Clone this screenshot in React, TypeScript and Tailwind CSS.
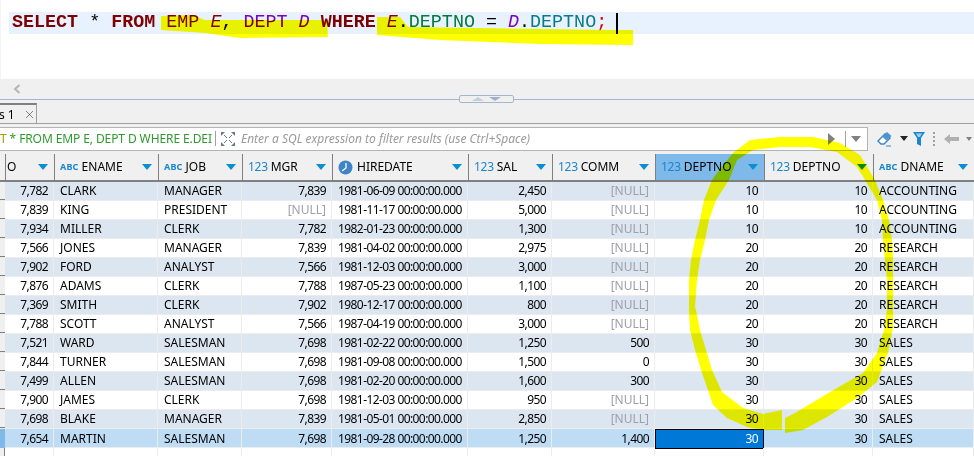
import { X } from 'lucide-react';

const cols = 'grid grid-cols-[5px_49px_104px_84px_90px_136px_84px_103px_109px_109px_101px]';

type Kind = 'abc' | 'num' | 'date' | 'none';

const headers: { label: string; kind: Kind; active?: boolean; green?: boolean }[] = [
  { label: 'O', kind: 'none' },
  { label: 'ENAME', kind: 'abc' },
  { label: 'JOB', kind: 'abc' },
  { label: 'MGR', kind: 'num' },
  { label: 'HIREDATE', kind: 'date' },
  { label: 'SAL', kind: 'num' },
  { label: 'COMM', kind: 'num' },
  { label: 'DEPTNO', kind: 'num', active: true },
  { label: 'DEPTNO', kind: 'num', green: true },
  { label: 'DNAME', kind: 'abc' },
];

const rows = [
  ['7,782', 'CLARK', 'MANAGER', '7,839', '1981-06-09 00:00:00.000', '2,450', '[NULL]', '10', '10', 'ACCOUNTING'],
  ['7,839', 'KING', 'PRESIDENT', '[NULL]', '1981-11-17 00:00:00.000', '5,000', '[NULL]', '10', '10', 'ACCOUNTING'],
  ['7,934', 'MILLER', 'CLERK', '7,782', '1982-01-23 00:00:00.000', '1,300', '[NULL]', '10', '10', 'ACCOUNTING'],
  ['7,566', 'JONES', 'MANAGER', '7,839', '1981-04-02 00:00:00.000', '2,975', '[NULL]', '20', '20', 'RESEARCH'],
  ['7,902', 'FORD', 'ANALYST', '7,566', '1981-12-03 00:00:00.000', '3,000', '[NULL]', '20', '20', 'RESEARCH'],
  ['7,876', 'ADAMS', 'CLERK', '7,788', '1987-05-23 00:00:00.000', '1,100', '[NULL]', '20', '20', 'RESEARCH'],
  ['7,369', 'SMITH', 'CLERK', '7,902', '1980-12-17 00:00:00.000', '800', '[NULL]', '20', '20', 'RESEARCH'],
  ['7,788', 'SCOTT', 'ANALYST', '7,566', '1987-04-19 00:00:00.000', '3,000', '[NULL]', '20', '20', 'RESEARCH'],
  ['7,521', 'WARD', 'SALESMAN', '7,698', '1981-02-22 00:00:00.000', '1,250', '500', '30', '30', 'SALES'],
  ['7,844', 'TURNER', 'SALESMAN', '7,698', '1981-09-08 00:00:00.000', '1,500', '0', '30', '30', 'SALES'],
  ['7,499', 'ALLEN', 'SALESMAN', '7,698', '1981-02-20 00:00:00.000', '1,600', '300', '30', '30', 'SALES'],
  ['7,900', 'JAMES', 'CLERK', '7,698', '1981-12-03 00:00:00.000', '950', '[NULL]', '30', '30', 'SALES'],
  ['7,698', 'BLAKE', 'MANAGER', '7,839', '1981-05-01 00:00:00.000', '2,850', '[NULL]', '30', '30', 'SALES'],
  ['7,654', 'MARTIN', 'SALESMAN', '7,698', '1981-09-28 00:00:00.000', '1,250', '1,400', '30', '30', 'SALES'],
];

const leftAligned = [1, 2, 9];

function SortArrow({ green }: { green?: boolean }) {
  return (
    <svg width="10" height="6" viewBox="0 0 10 6" className="ml-auto shrink-0">
      <path d="M0 0h10L5 6z" fill={green ? '#0a8a1e' : '#0b8fd0'} />
    </svg>
  );
}

function TypeIcon({ kind }: { kind: Kind }) {
  if (kind === 'abc') {
    return <span className="mr-[3px] text-[9px] font-bold tracking-[0.2px] text-[#1b86cf]">ABC</span>;
  }
  if (kind === 'num') {
    return <span className="mr-[3px] tracking-[-0.3px] text-[#1b86cf]">123</span>;
  }
  if (kind === 'date') {
    return (
      <svg width="15" height="15" viewBox="0 0 15 15" className="mr-[4px] shrink-0">
        <circle cx="7.5" cy="7.5" r="7" fill="#3d85c6" />
        <path d="M8 3v5L4 11" stroke="#fff" strokeWidth="1.3" fill="none" />
      </svg>
    );
  }
  return null;
}

function Editor() {
  return (
    <div className="h-[79px] border-l border-[#f4f4f4] bg-white pt-[12px] pl-[8px]">
      <div className="flex h-[22px] items-center bg-[#e8f2fe] pt-[1px] pl-[3px] font-['Liberation_Mono',monospace] text-[18.36px] leading-none whitespace-pre text-black">
        <span className="font-bold text-[#7f0000]">SELECT</span>
        <span> * </span>
        <span className="font-bold text-[#7f0000]">FROM</span>
        <span> </span>
        <span className="text-[#800000]">EMP</span>
        <span> </span>
        <span className="text-[#800000] italic">E</span>
        <span>, </span>
        <span className="text-[#7a00c4]">DEPT</span>
        <span> </span>
        <span className="text-[#7a00c4] italic">D</span>
        <span> </span>
        <span className="font-bold text-[#7f0000]">WHERE</span>
        <span> </span>
        <span className="text-[#800000] italic">E</span>
        <span>.</span>
        <span className="text-[#007a3d]">DEPTNO</span>
        <span> = </span>
        <span className="text-[#7a00c4] italic">D</span>
        <span>.</span>
        <span className="text-[#0a7a8a]">DEPTNO</span>
        <span className="text-[#e00000]">;</span>
        <span className="ml-[9px] h-[21px] w-[2px] bg-black" />
      </div>
    </div>
  );
}

function EditorScrollbar() {
  return (
    <div className="flex h-[20px] items-center bg-[#f0f0f0] pl-[13px]">
      <svg width="8" height="10" viewBox="0 0 8 10">
        <path d="M6.5 1L2 5l4.5 4" stroke="#b5b5b5" strokeWidth="2" fill="none" />
      </svg>
    </div>
  );
}

function Splitter() {
  return (
    <div className="flex h-[1px] justify-center bg-[#a3b8cf]">
      <div className="z-10 mt-[-4px] ml-[-1px] flex h-[8px] w-[55px] shrink-0 items-center justify-center gap-[5px] rounded-[2px] border border-[#a3b8cf] bg-[#f0f0f0]">
        <svg width="12" height="4" viewBox="0 0 12 4"><path d="M0 4h12L6 0z" fill="#c2cfdc" /></svg>
        <svg width="12" height="4" viewBox="0 0 12 4"><path d="M0 0h12L6 4z" fill="#9fb3c8" /></svg>
      </div>
    </div>
  );
}

function TabBar() {
  return (
    <div className="h-[24px] border-b border-[#a0a0a0] bg-[#f0f0f0] pt-[3px]">
      <div className="flex h-[21px] w-[37px] items-center border-t-2 border-r border-t-[#808080] border-r-[#a0a0a0] text-[12px] text-black">
        <span className="ml-[-1px]">s 1</span>
        <X size={13} strokeWidth={1} className="ml-[8px] text-[#222]" />
      </div>
    </div>
  );
}

function FilterBar() {
  return (
    <div className="flex h-[30px] items-center bg-[#f0f0f0] pb-[1px]">
      <div className="flex h-[24px] w-[868px] items-center border-t border-r border-b border-[#b4b4b4] bg-white">
        <div className="w-[212px] shrink-0 text-[12px] tracking-[-0.1px] whitespace-nowrap text-[#2f9a2f]">
          <span className="text-[#a0a000]">T</span> * FROM EMP E, DEPT D WHERE E.DEI
        </div>
        <div className="ml-[3px] h-[15px] w-[1px] bg-[#a0a0a0]" />
        <svg width="16" height="16" viewBox="0 0 16 16" className="ml-[4px] shrink-0">
          <path d="M1 1h4L1 5zM15 1h-4l4 4zM1 15h4l-4-4zM15 15h-4l4-4z" fill="#6a7a80" />
          <path d="M4 4l3 3M12 4L9 7M4 12l3-3M12 12L9 9" stroke="#6a7a80" />
        </svg>
        <span className="ml-[5px] text-[12px] whitespace-nowrap text-[#9a9a9a] italic">
          Enter a SQL expression to filter results (use Ctrl+Space)
        </span>
        <svg width="7" height="12" viewBox="0 0 7 12" className="ml-auto shrink-0">
          <path d="M0 0l7 6-7 6z" fill="#808080" />
        </svg>
        <div className="ml-[10px] h-[16px] w-[1px] bg-[#a0a0a0]" />
        <svg width="10" height="6" viewBox="0 0 10 6" className="mr-[6px] ml-[5px] shrink-0">
          <path d="M0 0h10L5 6z" fill="#808080" />
        </svg>
      </div>
      <svg width="16" height="16" viewBox="0 0 16 16" className="ml-[9px] shrink-0">
        <path d="M1 10l7-7 5 4-6 6H4z" fill="#fff" stroke="#3d85c6" strokeWidth="1.4" />
        <path d="M5 5.5l4.5 4L14.5 5 10 1z" fill="#4f94d0" />
        <path d="M9 15h5" stroke="#3d85c6" />
      </svg>
      <svg width="8" height="5" viewBox="0 0 8 5" className="ml-[7px] shrink-0">
        <path d="M0 0h8L4 5z" fill="#222" />
      </svg>
      <svg width="12" height="14" viewBox="0 0 12 14" className="ml-[5px] shrink-0">
        <path d="M0 0h12L8 6v8l-4-2V6z" fill="#1b86cf" />
        <path d="M3 1.5h6L7 5H5z" fill="#9fd0f0" />
      </svg>
      <div className="ml-[8px] h-[14px] border-l-2 border-dotted border-[#a0a0a0]" />
      <svg width="15" height="10" viewBox="0 0 15 10" className="ml-[9px] shrink-0">
        <path d="M0 5l6-5v3h9v4H6v3z" fill="#b0b0b0" />
      </svg>
      <svg width="6" height="4" viewBox="0 0 6 4" className="ml-[7px] shrink-0">
        <path d="M0 0h6L3 4z" fill="#808080" />
      </svg>
    </div>
  );
}

function GridHeader() {
  return (
    <div className={`${cols} h-[28px] border-b-2 border-[#808080] bg-[#f0f0f0] text-[12px] text-black`}>
      <div />
      {headers.map((h, i) => (
        <div
          key={i}
          className={`flex items-center border-l border-[#808080] pr-[6px] ${i === 0 ? 'pl-[1px]' : 'pl-[5px]'} ${
            h.active ? 'bg-[#7fb9ea]' : ''
          }`}
        >
          <TypeIcon kind={h.kind} />
          <span>{h.label}</span>
          <SortArrow green={h.green} />
        </div>
      ))}
    </div>
  );
}

function GridRows() {
  return (
    <div className="bg-white text-[12px] text-black">
      {rows.map((row, r) => {
        const last = r === rows.length - 1;
        const bg = last ? 'bg-[#bfdcf5]' : r % 2 === 0 ? 'bg-[#dce6f1]' : 'bg-white';
        return (
          <div key={r} className={`${cols} h-[19px] border-b border-[#ececec] ${bg}`}>
            <div className={`border-b border-[#808080] ${last ? 'bg-[#7fb9ea]' : 'bg-[#f0f0f0]'}`} />
            {row.map((value, c) => {
              const isNull = value === '[NULL]';
              const selected = last && c === 7;
              return (
                <div
                  key={c}
                  className={`flex items-center border-r border-[#ececec] whitespace-nowrap ${
                    leftAligned.includes(c)
                      ? 'pl-[6px]'
                      : c === 4
                        ? 'pl-[6px] tracking-[-0.58px]'
                        : 'justify-end pr-[5px] tracking-[-0.6px]'
                  } ${isNull ? 'tracking-normal text-[#a0a0a8]' : ''} ${
                    selected ? 'border border-black bg-[#0078d7] text-white' : ''
                  }`}
                >
                  {value}
                </div>
              );
            })}
          </div>
        );
      })}
      <div className={`${cols} h-[9px]`}>
        <div className="border-r border-[#808080] bg-[#f0f0f0]" />
        {headers.map((h, i) => (
          <div key={i} className="border-r border-[#ececec]" />
        ))}
      </div>
    </div>
  );
}

// marker strokes over the finished screenshot
const ring =
  '782,430 763,430 747,427 727,418 713,405 708,390 701,370 695,350 690,330 689,310 689,280 691,260 695,240 700,220 704,200 712,180 717,173 733,153 750,140 780,137 813,137 840,143 860,155 875,180 883,200 889,220 892,240 893,260 893,327 888,353 877,382 857,398 827,417 803,430 785,433 ' +
  '785,418 795,413 820,398 837,388 863,373 877,353 884,330 887,310 887,280 885,260 883,240 882,220 877,200 865,180 857,167 837,152 810,147 780,147 753,150 737,160 729,180 716,200 709,220 705,240 700,260 697,280 695,307 696,310 700,330 706,350 712,370 722,392 743,408 763,414 782,410';

function Highlighter() {
  return (
    <svg className="pointer-events-none absolute inset-0 mix-blend-multiply" width="974" height="456" viewBox="0 0 974 456">
      <polygon points="161,16 193,15 205,20 327,20 328,37 240,38 205,33 161,30" fill="#ffff00" />
      <polygon points="377,17 400,17 408,27 612,30 633,30 633,45 540,44 440,40 377,35" fill="#ffff00" />
      <polygon points={ring} fill="#ffff00" />
    </svg>
  );
}

export default function App() {
  return (
    <div className="relative h-[456px] w-[974px] overflow-hidden bg-white font-['Noto_Sans',sans-serif]">
      <Editor />
      <EditorScrollbar />
      <Splitter />
      <TabBar />
      <FilterBar />
      <GridHeader />
      <GridRows />
      <Highlighter />
    </div>
  );
}
